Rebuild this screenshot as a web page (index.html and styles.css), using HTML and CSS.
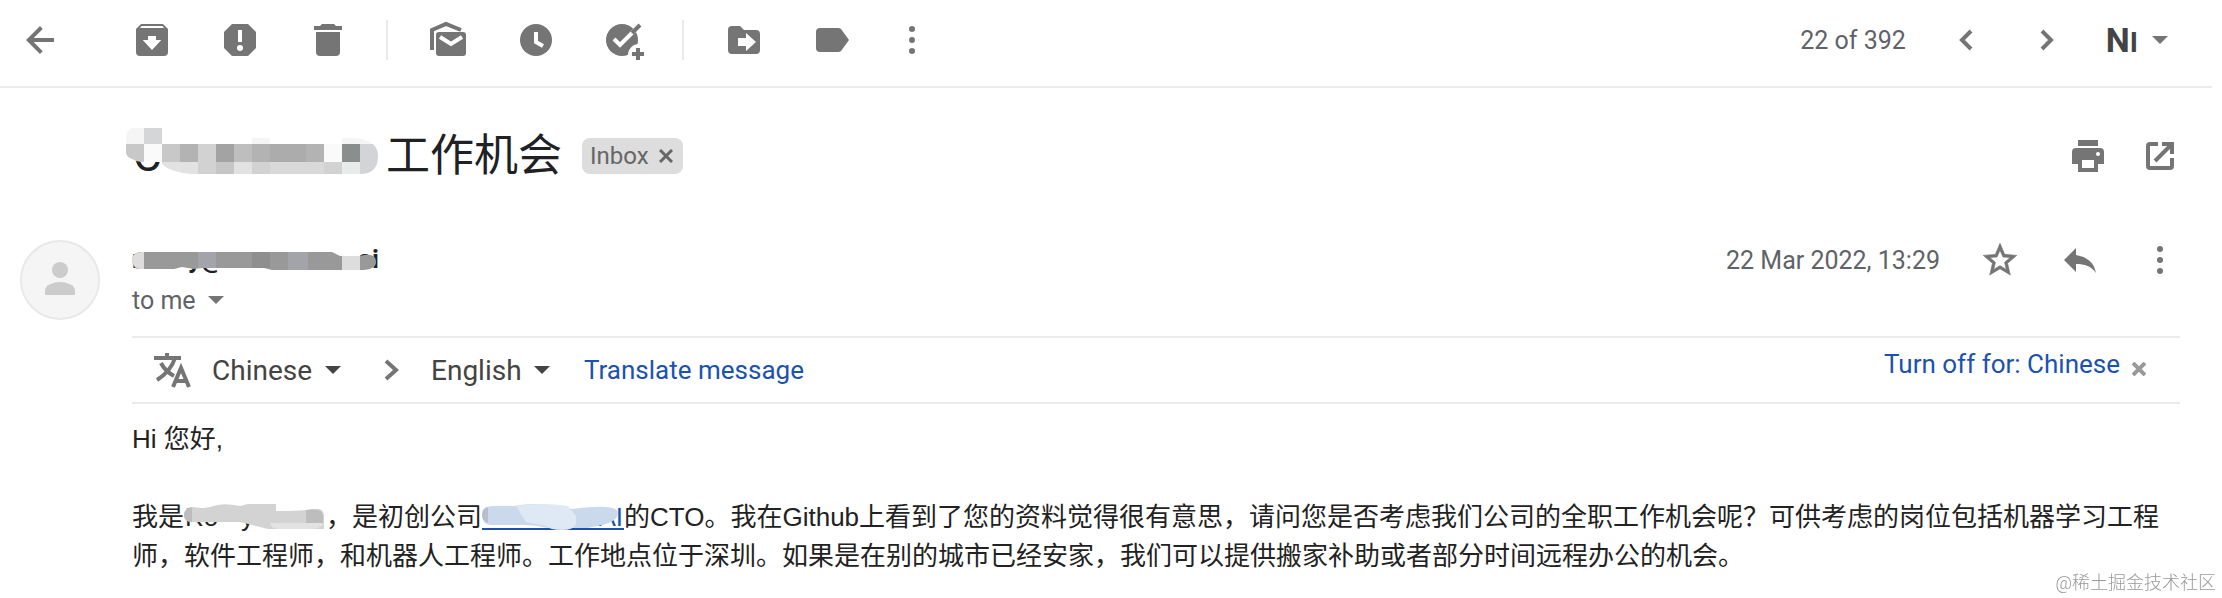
FILE: index.html
```html
<!DOCTYPE html>
<html lang="en">
<head>
    <meta charset="UTF-8">
    <meta name="viewport" content="width=device-width, initial-scale=1.0">
    <title>工作机会</title>
    <link rel="stylesheet" href="styles.css">
</head>
<body>
    <header class="toolbar">
        <div class="group">
            <button class="icon" aria-label="Back"><svg viewBox="0 0 40 40"><path d="M34 18H13.700l9-9L20 6 6 20l14 14 2.700-2.800L13.700 22H34z"/></svg></button>
        </div>
        <div class="group first">
            <button class="icon" aria-label="Archive"><svg viewBox="0 0 40 40"><path fill-rule="evenodd" d="M9 4h22l5 5v23a4 4 0 0 1-4 4H8a4 4 0 0 1-4-4V9zM9.500 6L8 8h24l-1.500-2zM16 16v4h-5.300L20 30l9.300-10H24v-4z"/></svg></button>
            <button class="icon" aria-label="Report spam"><svg viewBox="0 0 40 40"><path d="M12 4h16l8 8v16l-8 8H12l-8-8V12z"/><path class="cut" d="M18 10h4v12h-4z"/><circle class="cut" cx="20" cy="28" r="3"/></svg></button>
            <button class="icon" aria-label="Delete"><svg viewBox="0 0 40 40"><path d="M6 6h6l2-2h12l2 2h6v4H6zM8 12h24v20a4 4 0 0 1-4 4H12a4 4 0 0 1-4-4z"/></svg></button>
        </div>
        <div class="group split">
            <button class="icon" aria-label="Mark as unread"><svg viewBox="0 0 40 40"><path class="line" d="M4 30V10l14-6 15 6"/><rect x="8" y="12" width="30" height="24" rx="3"/><path class="line white" d="M12 17l11 7 11-7"/></svg></button>
            <button class="icon" aria-label="Snooze"><svg viewBox="0 0 40 40"><circle cx="20" cy="20" r="16"/><path class="line white" d="M20 12v10l7 4"/></svg></button>
            <button class="icon" aria-label="Add to tasks"><svg viewBox="0 0 40 40"><circle cx="18" cy="20" r="16"/><circle class="cut" cx="35" cy="35" r="11"/><path class="line white" d="M10 19l6 6L33 8"/><path class="line" d="M28 13l8-8M34 28v12M28 34h12"/></svg></button>
        </div>
        <div class="group split">
            <button class="icon" aria-label="Move to"><svg viewBox="0 0 40 40"><path d="M8 6h8l4 4h12a4 4 0 0 1 4 4v16a4 4 0 0 1-4 4H8a4 4 0 0 1-4-4V10a4 4 0 0 1 4-4z"/><path class="cut" d="M14 18h8v-5l10 9-10 9v-5h-8z"/></svg></button>
            <button class="icon" aria-label="Labels"><svg viewBox="0 0 40 40"><path d="M8 8h18q2 0 3 1l8 11-8 11q-1 1-3 1H8a4 4 0 0 1-4-4V12a4 4 0 0 1 4-4z"/></svg></button>
            <button class="icon more" aria-label="More"><svg viewBox="0 0 40 40"><circle cx="20" cy="9" r="3"/><circle cx="20" cy="20" r="3"/><circle cx="20" cy="31" r="3"/></svg></button>
        </div>
        <div class="pager">
            <span class="count">22 of 392</span>
            <button class="icon" aria-label="Newer"><svg viewBox="0 0 40 40"><path class="line" d="M25 11l-9 9 9 9"/></svg></button>
            <button class="icon" aria-label="Older"><svg viewBox="0 0 40 40"><path class="line" d="M16 11l9 9-9 9"/></svg></button>
            <button class="input-tool" aria-label="Input tools"><b>N<small>I</small></b><svg class="caret" viewBox="0 0 16 8"><path d="M0 0h16L8 8z"/></svg></button>
        </div>
    </header>

    <main>
        <div class="subject">
            <h1>
                <svg class="hidden-name" viewBox="0 0 252 56">
                    <defs>
                        <clipPath id="subject-clip"><path d="M0 12Q0-2 14-2h22v12h180q36-2 36 18 0 18-18 18H66Q44 44 36 36 14 36 4 30 0 28 0 24z"/></clipPath>
                    </defs>
                    <text x="7" y="43" font-size="44" fill="#202124">C</text>
                    <g clip-path="url(#subject-clip)">
                        <path fill="#f5f5f5" d="M0-2h18v18H0zM126 8h18v8h-18zM216 8h36v8h-36z"/>
                        <path fill="#d5d6d7" d="M18-2h18v18H18z"/>
                        <path fill="#c8c8c8" d="M0 16h18v18H0zM36 16h18v18H36z"/>
                        <path fill="#fafafa" d="M18 16h18v18H18zM198 16h18v18h-18z"/>
                        <path fill="#b3b3b3" d="M54 16h18v18H54zM126 16h18v18h-18zM180 16h18v18h-18z"/>
                        <path fill="#d2d2d2" d="M72 16h18v18H72zM72 34h18v12H72zM126 34h18v12h-18zM198 34h18v12h-18z"/>
                        <path fill="#a3a3a3" d="M90 16h18v18H90z"/>
                        <path fill="#bebebe" d="M108 16h18v18h-18z"/>
                        <path fill="#acacac" d="M144 16h36v18h-36z"/>
                        <path fill="#8a8e8d" d="M216 16h18v18h-18z"/>
                        <path fill="#d2d4d7" d="M234 16h18v18h-18zM234 34h18v12h-18z"/>
                        <path fill="#e2e2e2" d="M36 34h36v12H36zM108 34h18v12h-18z"/>
                        <path fill="#c6c6c6" d="M90 34h18v12H90z"/>
                        <path fill="#d9d9d9" d="M144 34h54v12h-54z"/>
                        <path fill="#e8ebea" d="M216 34h18v12h-18z"/>
                    </g>
                </svg>
                <span lang="zh-CN">工作机会</span>
            </h1>
            <span class="tag">Inbox <button aria-label="Remove label"><svg viewBox="0 0 14 14"><path d="M1 1l12 12M13 1L1 13"/></svg></button></span>
            <div class="actions">
                <button class="icon" aria-label="Print"><svg viewBox="0 0 40 40"><path fill-rule="evenodd" d="M10 4h20v6H10zM8 12h24a4 4 0 0 1 4 4v12h-6v8H10v-8H4V16a4 4 0 0 1 4-4zM14 24v8h12v-8z"/><circle class="cut" cx="30" cy="18" r="2"/></svg></button>
                <button class="icon" aria-label="Open in new window"><svg viewBox="0 0 40 40"><path class="line" d="M18 8h-8a2 2 0 0 0-2 2v20a2 2 0 0 0 2 2h20a2 2 0 0 0 2-2v-8M22 8h10v10M32 8L15 25"/></svg></button>
            </div>
        </div>

        <article class="message">
            <svg class="avatar" viewBox="0 0 80 80">
                <circle cx="40" cy="40" r="39" fill="#f5f5f5" stroke="#e8e8e8" stroke-width="2"/>
                <circle cx="40" cy="30" r="8" fill="#ccc"/>
                <path fill="#ccc" d="M25 55v-5c0-5 9-8 15-8s15 3 15 8v5z"/>
            </svg>
            <div class="content">
                <div class="sender">
                    <svg class="address" viewBox="0 0 252 40">
                        <g font-size="26" font-weight="700" fill="#202124">
                            <text x="0" y="28">r</text>
                            <text x="56" y="28">y@co</text>
                            <text x="134" y="28">r</text>
                            <text x="226" y="28">ai</text>
                        </g>
                        <path fill="#fff" d="M12 4h40v9H12zM52 4h170v9H52z"/>
                        <path fill="#999" d="M0 18q2-6 10-6h190l8 4h20q16-4 16 6 0 8-16 8h-88l-8-2H70l-8 1-12-2-8 2H6Q0 28 0 18z"/>
                        <path fill="#ddd" d="M0 18q2-6 12-6v17Q0 30 0 18zM210 16h18v14h-18z"/>
                        <path fill="#a3a4a9" d="M66 12h18v16H66zM156 12h20v18h-20z"/>
                        <path fill="#8f8f8f" d="M120 12h18v16h-18z"/>
                    </svg>
                    <div class="meta">
                        <time datetime="2022-03-22T13:29">22 Mar 2022, 13:29</time>
                        <button class="icon" aria-label="Star"><svg viewBox="0 0 24 24"><path stroke="#757575" stroke-width=".4" d="M22 9.240l-7.190-.620L12 2 9.190 8.630 2 9.240l5.460 4.730L5.820 21 12 17.270 18.180 21l-1.630-7.030L22 9.240zM12 15.400l-3.760 2.270 1-4.280-3.320-2.880 4.380-.380L12 6.100l1.710 4.040 4.380.380-3.320 2.880 1 4.280L12 15.400z"/></svg></button>
                        <button class="icon" aria-label="Reply"><svg viewBox="0 0 40 40"><path d="M16 8L4 20l12 12v-8c9 0 15 2 20 9-2-11-9-16-20-18z"/></svg></button>
                        <button class="icon" aria-label="More"><svg viewBox="0 0 40 40"><circle cx="20" cy="9" r="3"/><circle cx="20" cy="20" r="3"/><circle cx="20" cy="31" r="3"/></svg></button>
                    </div>
                </div>
                <button class="to">to me <svg class="caret" viewBox="0 0 16 8"><path d="M0 0h16L8 8z"/></svg></button>

                <div class="translate">
                    <svg class="glyph" viewBox="0 0 40 40"><path d="M2 8h27M15 3v5M23 8q-4 13-18 22M9 13q4 8 13 13M21 37l8-19 8 19M24 31h10"/></svg>
                    <label class="language">
                        <select aria-label="From"><option>Chinese</option></select>
                        <svg class="caret" viewBox="0 0 16 8"><path d="M0 0h16L8 8z"/></svg>
                    </label>
                    <svg class="chevron" viewBox="0 0 40 40"><path d="M15 11l10 9-10 9"/></svg>
                    <label class="language">
                        <select aria-label="To"><option>English</option></select>
                        <svg class="caret" viewBox="0 0 16 8"><path d="M0 0h16L8 8z"/></svg>
                    </label>
                    <a class="run" href="#">Translate message</a>
                    <div class="turn-off">
                        <a href="#">Turn off for: Chinese</a>
                        <button aria-label="Close"><svg viewBox="0 0 14 14"><path d="M1 1l12 12M13 1L1 13"/></svg></button>
                    </div>
                </div>

                <div class="body" lang="zh-CN">
                    <p>Hi 您好,</p>
                    <p>我是<svg class="redacted" viewBox="0 0 142 39"><g font-size="26" fill="#222"><text x="1" y="28">Ro</text><text x="57" y="28">y</text></g><path fill="#d3d3d3" d="M0 17q0-8 10-8 8 2 16 0 12-5 30-1l8-2h28v7q24 0 42-2 6 0 6 8v12H84l-28-7H8q-8 0-8-7z"/><path fill="#bdbdbd" d="M0 17q0-6 8-8v15q-8 0-8-7zM122 12q17-3 17 6v8h-17z"/><path fill="#e2e2e2" d="M86 25h53q0 6-16 6h-28q-8 0-9-6z"/></svg>，是初创公司<a href="#" aria-label="Company website"><svg class="redacted" viewBox="0 0 142 39"><text x="141" y="28" text-anchor="end" font-size="26" fill="#1b52b0">AI</text><path fill="#1b52b0" d="M0 30h142v2H0z"/><path fill="#cbd9ed" d="M0 17q0-9 12-9h20q20-4 44 0l14 3q46-6 46 4 0 8-16 12l-14 3H66q-12-3-24-3H10Q0 27 0 17z"/><path fill="#dfe8f5" d="M34 8q24-4 52 0l8 10v8q-2 6-14 6-12 0-16-4l-20-4z"/><path fill="#b8bfcc" d="M0 17q0-7 6-8v16q-6-2-6-8z"/></svg></a>的CTO。我在Github上看到了您的资料觉得很有意思，请问您是否考虑我们公司的全职工作机会呢？可供考虑的岗位包括机器学习工程师，软件工程师，和机器人工程师。工作地点位于深圳。如果是在别的城市已经安家，我们可以提供搬家补助或者部分时间远程办公的机会。</p>
                </div>
            </div>
        </article>
    </main>

    <div class="watermark" lang="zh-CN">@稀土掘金技术社区</div>
</body>
</html>
```
FILE: styles.css
```css
* {
    box-sizing: border-box;
}

body {
    margin: 0;
    background: #fff;
    color: #222;
    font-family: Roboto, "Noto Sans CJK SC", sans-serif;
    font-size: 25px;
}

button {
    padding: 0;
    border: 0;
    background: none;
    color: inherit;
    font: inherit;
    cursor: pointer;
}

svg {
    display: block;
    flex: none;
    fill: #757575;
}

a {
    color: #1b52b0;
    text-decoration: none;
}

.icon,
.icon svg {
    display: block;
    width: 40px;
    height: 40px;
}

.line {
    fill: none;
    stroke: #757575;
    stroke-width: 4;
}

.white {
    stroke: #fff;
}

.cut {
    fill: #fff;
}

.caret {
    width: 16px;
    height: 8px;
}

/* Toolbar */
.toolbar {
    display: flex;
    align-items: center;
    margin-right: 10px;
    padding: 20px 44px 26px 20px;
    border-bottom: 2px solid #ebebeb;
}

.group {
    display: flex;
    gap: 48px;
}

.first {
    margin-left: 72px;
}

.split {
    margin-left: 38px;
    padding-left: 40px;
    border-left: 2px solid #ebebeb;
}

.group .more {
    margin-left: -8px;
}

.pager {
    display: flex;
    align-items: center;
    gap: 40px;
    margin-left: auto;
    color: #5f6368;
}

.input-tool {
    display: flex;
    align-items: center;
    gap: 14px;
    height: 40px;
    color: #444;
}

.input-tool b {
    font-size: 34px;
    line-height: 40px;
}

.input-tool small {
    font-size: 28px;
    line-height: 1;
}

/* Subject */
.subject {
    display: flex;
    align-items: center;
    padding: 40px 42px 0 126px;
}

.subject h1 {
    display: flex;
    align-items: center;
    gap: 8px;
    margin: 0;
    color: #202124;
    font-size: 44px;
    font-weight: 400;
    line-height: 56px;
}

.hidden-name {
    width: 252px;
    height: 56px;
}

.tag {
    display: flex;
    align-items: center;
    gap: 10px;
    height: 36px;
    margin-left: 20px;
    padding: 0 10px 0 8px;
    border-radius: 8px;
    background: #ddd;
    color: #666;
    font-size: 24px;
}

.tag svg {
    width: 14px;
    height: 14px;
    stroke: #666;
    stroke-width: 3;
}

.actions {
    display: flex;
    gap: 32px;
    margin-left: auto;
}

/* Message */
.message {
    display: flex;
    gap: 32px;
    padding: 56px 42px 0 20px;
}

.avatar {
    width: 80px;
    height: 80px;
}

.content {
    flex: 1;
    min-width: 0;
}

.sender,
.meta {
    display: flex;
    align-items: center;
}

.address {
    width: 252px;
    height: 40px;
}

.meta {
    gap: 40px;
    margin-left: auto;
    color: #5f6368;
}

.to {
    display: flex;
    align-items: center;
    gap: 12px;
    height: 40px;
    color: #5f6368;
}

.translate {
    display: flex;
    align-items: center;
    height: 68px;
    margin-top: 16px;
    padding: 0 34px 0 20px;
    border-top: 2px solid #ebebeb;
    border-bottom: 2px solid #ebebeb;
    font-size: 26px;
}

.glyph,
.chevron {
    width: 40px;
    height: 40px;
    fill: none;
    stroke: #757575;
    stroke-width: 4;
}

.glyph {
    margin-right: 20px;
}

.chevron {
    margin: 0 20px 0 30px;
}

.language {
    display: flex;
    align-items: center;
    gap: 12px;
}

.language select {
    appearance: none;
    padding: 0;
    border: 0;
    background: none;
    color: #444;
    font: inherit;
    font-size: 28px;
}

.language .caret {
    fill: #444;
}

.run {
    margin-left: 34px;
}

.turn-off {
    display: flex;
    align-items: center;
    gap: 12px;
    height: 52px;
    margin-left: auto;
    align-self: flex-start;
}

.turn-off button {
    padding-top: 10px;
}

.turn-off button svg {
    width: 14px;
    height: 14px;
    stroke: #999;
    stroke-width: 4;
}

.body {
    padding-top: 16px;
    font-family: "Liberation Sans", "Noto Sans CJK SC", sans-serif;
    font-size: 26px;
    line-height: 39px;
}

.body p {
    margin: 0 0 39px;
}

.body p:last-child {
    margin: 0;
}

.redacted {
    display: inline-block;
    width: 142px;
    height: 39px;
    vertical-align: top;
}

.watermark {
    position: fixed;
    right: 6px;
    bottom: 2px;
    color: #999;
    font-size: 18px;
    font-weight: 300;
    line-height: 26px;
}
```
